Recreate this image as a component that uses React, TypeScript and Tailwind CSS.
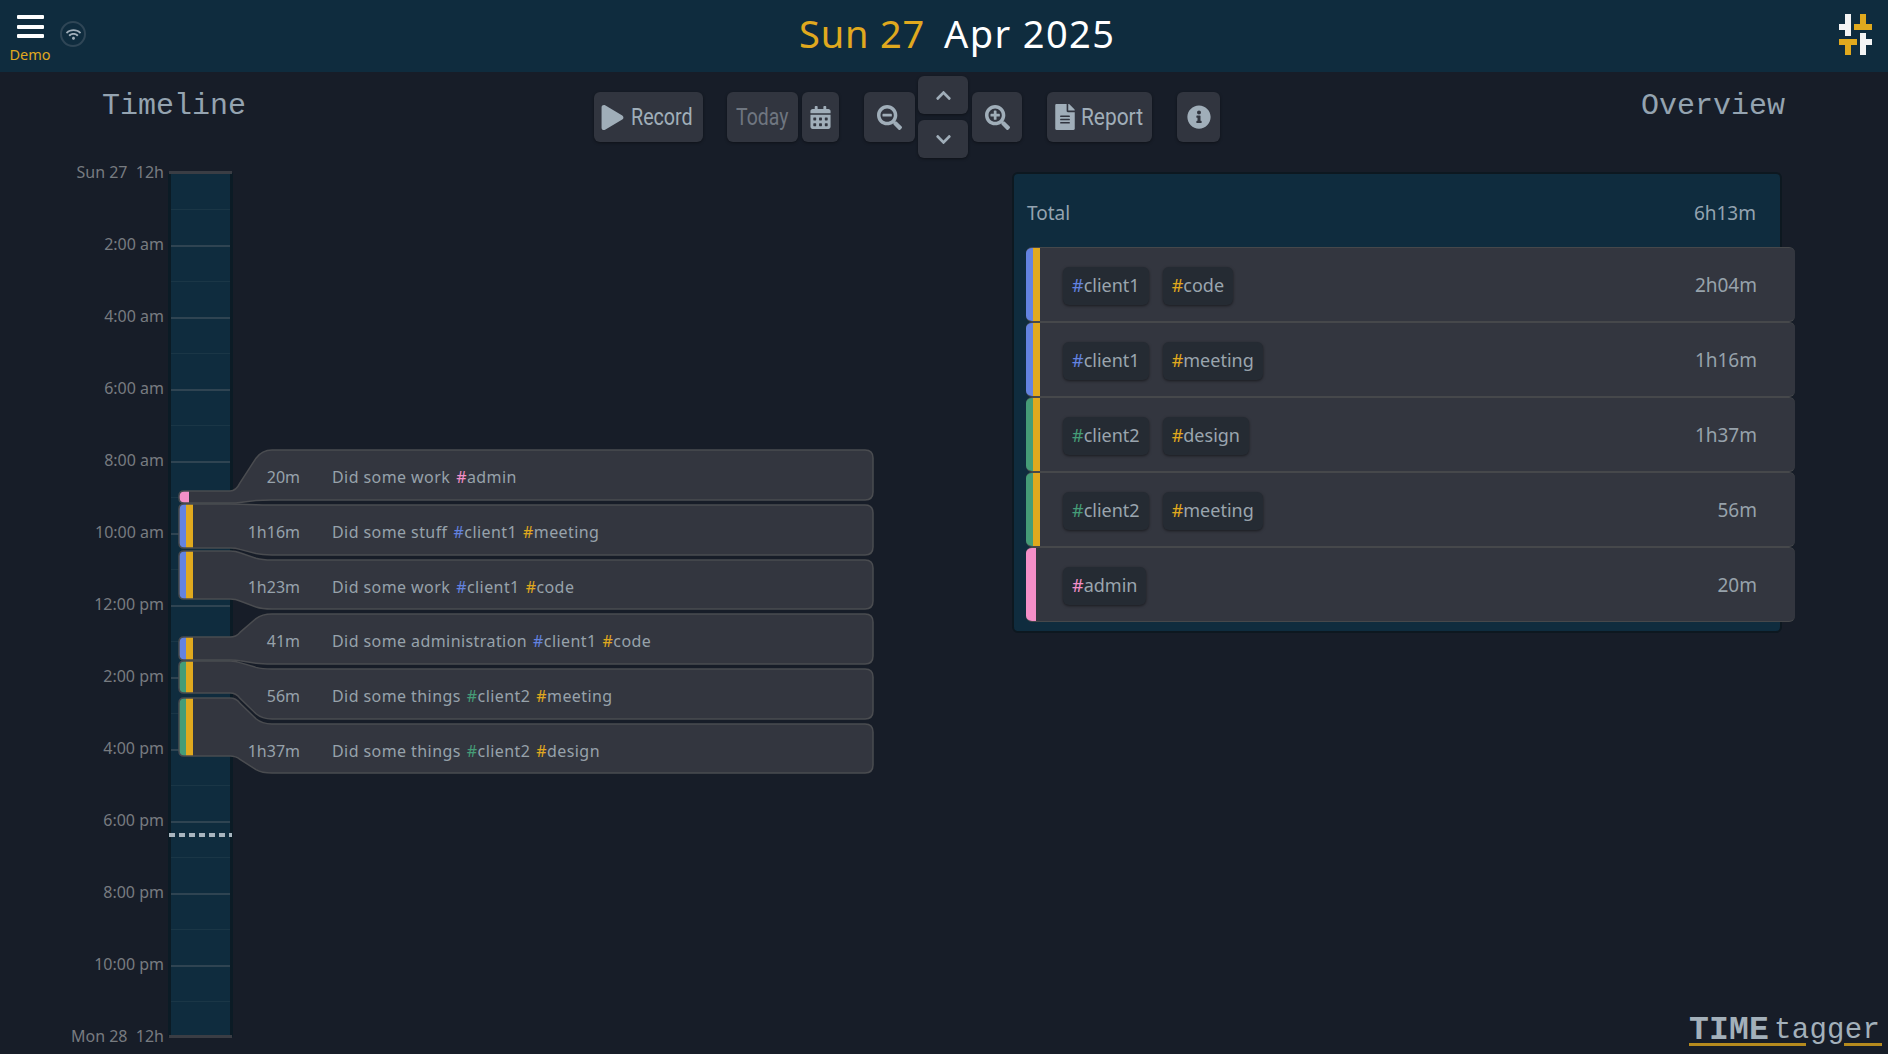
import React from 'react';
import { FaPlay, FaCalendarAlt, FaSearchMinus, FaSearchPlus, FaChevronUp, FaChevronDown, FaFileAlt, FaInfoCircle, FaWifi } from 'react-icons/fa';

const BLUE = '#6383e0';
const GREEN = '#459c77';
const YELLOW = '#e0a91e';
const PINK = '#f48fc8';

const tagColors: Record<string, string> = {
  client1: 'text-[#6383e0]',
  client2: 'text-[#459c77]',
  code: 'text-[#e0a91e]',
  meeting: 'text-[#e0a91e]',
  design: 'text-[#e0a91e]',
  admin: 'text-[#f48fc8]',
};

interface TimelineRecord {
  duration: string;
  text: string;
  tags: string[];
  colors: string[];
  barTop: number;
  barBottom: number;
  cardTop: number;
  cardBottom: number;
}

// y values are relative to the timeline canvas, which starts at y=165 on the page
const OFFSET = 165;
const records: TimelineRecord[] = [
  { duration: '20m', text: 'Did some work', tags: ['admin'], colors: [PINK], barTop: 491, barBottom: 503, cardTop: 450, cardBottom: 500 },
  { duration: '1h16m', text: 'Did some stuff', tags: ['client1', 'meeting'], colors: [BLUE, YELLOW], barTop: 504, barBottom: 548, cardTop: 505, cardBottom: 555 },
  { duration: '1h23m', text: 'Did some work', tags: ['client1', 'code'], colors: [BLUE, YELLOW], barTop: 551, barBottom: 599, cardTop: 560, cardBottom: 609 },
  { duration: '41m', text: 'Did some administration', tags: ['client1', 'code'], colors: [BLUE, YELLOW], barTop: 637, barBottom: 660, cardTop: 614, cardBottom: 664 },
  { duration: '56m', text: 'Did some things', tags: ['client2', 'meeting'], colors: [GREEN, YELLOW], barTop: 661, barBottom: 693, cardTop: 669, cardBottom: 719 },
  { duration: '1h37m', text: 'Did some things', tags: ['client2', 'design'], colors: [GREEN, YELLOW], barTop: 698, barBottom: 756, cardTop: 724, cardBottom: 773 },
];

const hourLabels = [
  'Sun 27  12h', '2:00 am', '4:00 am', '6:00 am', '8:00 am', '10:00 am', '12:00 pm',
  '2:00 pm', '4:00 pm', '6:00 pm', '8:00 pm', '10:00 pm', 'Mon 28  12h',
];

const overviewRows = [
  { tags: ['client1', 'code'], colors: [BLUE, YELLOW], time: '2h04m' },
  { tags: ['client1', 'meeting'], colors: [BLUE, YELLOW], time: '1h16m' },
  { tags: ['client2', 'design'], colors: [GREEN, YELLOW], time: '1h37m' },
  { tags: ['client2', 'meeting'], colors: [GREEN, YELLOW], time: '56m' },
  { tags: ['admin'], colors: [PINK], time: '20m' },
];

const Tag: React.FC<{ name: string }> = ({ name }) => (
  <span>
    <span className={tagColors[name]}>#</span>
    {name}
  </span>
);

const recordPath = (r: TimelineRecord) => {
  const b0 = r.barTop - OFFSET;
  const b1 = r.barBottom - OFFSET;
  const t = r.cardTop - OFFSET;
  const c = r.cardBottom - OFFSET;
  const rad = Math.min(5, (b1 - b0) / 2);
  const sideTop = (b0 + 0.2 * (t - b0)).toFixed(1);
  const sideTop2 = (b0 + 0.8 * (t - b0)).toFixed(1);
  const sideBot = (b1 + 0.2 * (c - b1)).toFixed(1);
  const sideBot2 = (b1 + 0.8 * (c - b1)).toFixed(1);
  return [
    `M ${179 + rad} ${b0} L 230 ${b0} Q 236 ${b0} 240 ${sideTop} L 256 ${sideTop2} Q 262 ${t} 272 ${t}`,
    `L 865 ${t} Q 873 ${t} 873 ${t + 8} L 873 ${c - 8} Q 873 ${c} 865 ${c} L 272 ${c}`,
    `Q 262 ${c} 256 ${sideBot2} L 240 ${sideBot} Q 236 ${b1} 230 ${b1} L ${179 + rad} ${b1}`,
    `Q 179 ${b1} 179 ${b1 - rad} L 179 ${b0 + rad} Q 179 ${b0} ${179 + rad} ${b0} Z`,
  ].join(' ');
};

const Stripes: React.FC<{ r: TimelineRecord }> = ({ r }) => {
  const y0 = r.barTop - OFFSET;
  const y1 = r.barBottom - OFFSET;
  const rad = Math.min(5, (y1 - y0) / 2);
  const single = r.colors.length === 1;
  const leftEnd = single ? 189 : 186;
  return (
    <>
      <path
        d={`M ${179 + rad} ${y0} L ${leftEnd} ${y0} L ${leftEnd} ${y1} L ${179 + rad} ${y1} Q 179 ${y1} 179 ${y1 - rad} L 179 ${y0 + rad} Q 179 ${y0} ${179 + rad} ${y0} Z`}
        fill={r.colors[0]}
      />
      {!single && <rect x={186} y={y0} width={7} height={y1 - y0} fill={r.colors[1]} />}
    </>
  );
};

const toolButton = 'flex items-center rounded-md bg-[#31353f] shadow-[0_1px_3px_rgba(0,0,0,0.4)]';
const iconButton = 'justify-center text-[#a0aeb9]';
// no condensed face is installed, so the label is squeezed horizontally
const condensed = 'inline-block origin-left font-["Roboto",sans-serif] text-[24px] leading-none whitespace-nowrap';

export default function App() {
  return (
    <div className="w-[1888px] h-[1054px] overflow-hidden relative bg-[#171d28] font-['Noto_Sans',sans-serif] text-[#9aa5ae]">
      {/* Header */}
      <header className="h-[72px] bg-[#0f2c3e] flex items-start relative">
        <div className="w-[60px] flex flex-col items-center pt-[15px]">
          <div className="w-[27px] flex flex-col gap-[5.5px]">
            <div className="h-[4px] rounded-[1px] bg-white" />
            <div className="h-[4px] rounded-[1px] bg-white" />
            <div className="h-[4px] rounded-[1px] bg-white" />
          </div>
          <span className="text-[14.5px] leading-none mt-[9px] text-[#e0a91e]">Demo</span>
        </div>
        <div className="w-[26px] h-[26px] mt-[21px] rounded-full border-[2.5px] border-[#2f4656] flex items-center justify-center text-[#a0aeb9] text-[15px]">
          <FaWifi />
        </div>
        <h1 className="absolute left-[799px] top-[9px] flex gap-[19px] text-[38px] leading-[48px] whitespace-nowrap">
          <span className="text-[#e0a91e] tracking-[0.8px]">Sun 27</span>
          <span className="text-white tracking-[1.4px]">Apr 2025</span>
        </h1>
        <svg className="absolute left-[1839px] top-[14px]" width="33" height="41" viewBox="0 0 33 41">
          <path d="M6 0h6v22H6v-6H0v-6h6z" fill="#f4f4f4" />
          <path d="M21 0h6v10h6v6H15v-6h6z" fill={YELLOW} />
          <path d="M0 25h18v6h-6v10H6V31H0z" fill={YELLOW} />
          <path d="M21 19h6v6h6v6h-6v10h-6z" fill="#f4f4f4" />
        </svg>
      </header>

      {/* Toolbar row */}
      <div className="h-[93px] flex items-start relative">
        <h2 className="absolute left-[102px] top-[18px] font-['Liberation_Mono',monospace] text-[30px] leading-[32px] text-[#94a3b0]">Timeline</h2>
        <div className="ml-[594px] mt-[20px] h-[50px] flex items-center">
          <button className={`${toolButton} w-[109px] h-[50px] pl-[6px] gap-[6px] text-[#a0aeb9]`}>
            <FaPlay className="text-[25px] shrink-0" />
            <span className={`${condensed} scale-x-[0.82]`}>Record</span>
          </button>
          <button className={`${toolButton} w-[71px] h-[50px] ml-[24px] pl-[9px] text-[#6f7680]`}>
            <span className={`${condensed} scale-x-[0.81]`}>Today</span>
          </button>
          <button className={`${toolButton} ${iconButton} w-[37px] h-[50px] ml-[4px]`}>
            <FaCalendarAlt className="text-[23px]" />
          </button>
          <button className={`${toolButton} ${iconButton} w-[51px] h-[50px] ml-[25px]`}>
            <FaSearchMinus className="text-[25px]" />
          </button>
          <div className="ml-[3px] flex flex-col gap-[6px]">
            <button className={`${toolButton} ${iconButton} w-[50px] h-[38px]`}>
              <FaChevronUp className="text-[17px]" />
            </button>
            <button className={`${toolButton} ${iconButton} w-[50px] h-[38px]`}>
              <FaChevronDown className="text-[17px]" />
            </button>
          </div>
          <button className={`${toolButton} ${iconButton} w-[50px] h-[50px] ml-[4px]`}>
            <FaSearchPlus className="text-[25px]" />
          </button>
          <button className={`${toolButton} w-[105px] h-[50px] ml-[25px] pl-[5px] gap-[3px] text-[#a0aeb9]`}>
            <FaFileAlt className="text-[26px] shrink-0" />
            <span className={`${condensed} scale-x-[0.87]`}>Report</span>
          </button>
          <button className={`${toolButton} ${iconButton} w-[43px] h-[50px] ml-[25px]`}>
            <FaInfoCircle className="text-[24px]" />
          </button>
        </div>
        <h2 className="absolute right-[103px] top-[18px] font-['Liberation_Mono',monospace] text-[30px] leading-[32px] text-[#94a3b0]">Overview</h2>
      </div>

      <div className="flex items-start">
        {/* Timeline canvas */}
        <div className="relative w-[1012px] h-[889px] shrink-0">
          {/* day bar */}
          <div className="absolute left-[168px] top-[8px] w-[65px] h-[864px] bg-[#0f2c3e] border-x-[3px] border-[#0b1b25]" />
          <div className="absolute left-[169px] top-[6px] w-[63px] h-[3px] bg-[#3a3d44]" />
          <div className="absolute left-[169px] top-[870px] w-[63px] h-[3px] bg-[#3a3d44]" />
          {hourLabels.map((label, i) => (
            <React.Fragment key={label}>
              <div
                className="absolute left-0 w-[164px] text-right text-[16px] leading-[20px] text-[#777b80] whitespace-pre"
                style={{ top: 6 + i * 72.08 - 9.5 }}
              >
                {label}
              </div>
              {i > 0 && i < 12 && (
                <div className="absolute left-[171px] w-[59px] h-[1.5px] bg-[#2f4452]" style={{ top: 8 + i * 72 }} />
              )}
              {i < 12 && (
                <div className="absolute left-[171px] w-[59px] h-px bg-[#1a3646]" style={{ top: 44 + i * 72 }} />
              )}
            </React.Fragment>
          ))}
          {/* now line */}
          <div className="absolute left-[169px] top-[668px] w-[63px] h-[4px] bg-[repeating-linear-gradient(90deg,#a9b6c0_0,#a9b6c0_6px,transparent_6px,transparent_10px)]" />

          <svg className="absolute left-0 top-0" width="880" height="889" viewBox="0 0 880 889">
            {records.map((r) => (
              <g key={r.barTop}>
                <path d={recordPath(r)} fill="#33363f" />
                <Stripes r={r} />
                <path d={recordPath(r)} fill="none" stroke="#4a4c50" strokeWidth="1.5" />
              </g>
            ))}
          </svg>

          {records.map((r) => (
            <div
              key={r.barTop}
              className="absolute left-0 h-[24px] flex items-center text-[16px] leading-[24px] text-[#97a2ab] whitespace-nowrap"
              style={{ top: (r.cardTop + r.cardBottom) / 2 - OFFSET - 12 + 2 }}
            >
              <span className="w-[300px] text-right">{r.duration}</span>
              <span className="ml-[32px] flex gap-[6px] tracking-[0.42px]">
                <span>{r.text}</span>
                {r.tags.map((tag) => (
                  <Tag key={tag} name={tag} />
                ))}
              </span>
            </div>
          ))}
        </div>

        {/* Overview panel */}
        <section className="w-[770px] h-[461px] mt-[7px] rounded-md bg-[#0f2c3e] border-2 border-[#0d1820] shrink-0">
          <div className="h-[73px] flex items-center justify-between pl-[13px] pr-[24px] text-[19px] text-[#94a3b0] pt-[6px]">
            <span>Total</span>
            <span>6h13m</span>
          </div>
          <div className="w-[769px] ml-[12px]">
            {overviewRows.map((row) => (
              <div
                key={row.time}
                className="relative h-[75px] pt-[2px] bg-[#33363f] border-y border-[#46484b] rounded-md flex items-center justify-between pl-[37px] pr-[38px] overflow-hidden"
              >
                <div className="absolute left-0 top-0 bottom-0 flex">
                  {row.colors.map((c) => (
                    <div key={c} className="h-full" style={{ backgroundColor: c, width: row.colors.length === 1 ? 10 : 7 }} />
                  ))}
                </div>
                <div className="flex gap-[14px]">
                  {row.tags.map((tag) => (
                    <span key={tag} className="h-[38px] px-[9px] rounded-md bg-[#252b33] flex items-center text-[18px] text-[#9aa5ae] shadow-[0_1px_3px_rgba(0,0,0,0.5)]">
                      <Tag name={tag} />
                    </span>
                  ))}
                </div>
                <span className="text-[19px] text-[#97a2ab]">{row.time}</span>
              </div>
            ))}
          </div>
        </section>
      </div>

      {/* Logo */}
      <div className="absolute left-[1689px] top-[1012px] w-[195px] h-[40px] flex items-start whitespace-nowrap font-['Liberation_Mono',monospace] text-[#a3b0ba]">
        <span className="font-bold text-[33px] leading-[38px] w-[85px] tracking-[0.2px]">TIME</span>
        <span className="text-[29px] leading-[38px] tracking-[0.3px]">tagger</span>
        <div className="absolute left-0 top-[31px] w-[117px] h-[3px] bg-[#b58a1e]" />
        <div className="absolute left-[155px] top-[31px] w-[38px] h-[3px] bg-[#b58a1e]" />
      </div>
    </div>
  );
}
